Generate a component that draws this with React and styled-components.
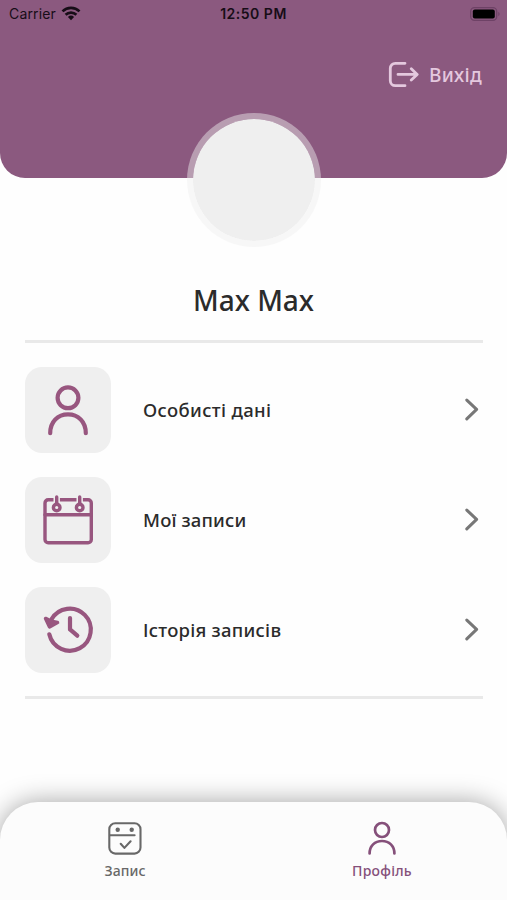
import React from "react"
import styled, { createGlobalStyle } from "styled-components"

const GlobalStyle = createGlobalStyle`
  * {
    box-sizing: border-box;
  }
  body {
    margin: 0;
    background: #fefefe;
    font-family: "Noto Sans", "Open Sans", sans-serif;
  }
`
const Screen = styled.div`
  display: flex;
  flex-direction: column;
  width: 507px;
  height: 900px;
  overflow: hidden;
`
const Header = styled.header`
  height: 178px;
  flex-shrink: 0;
  background: #8b597f;
  border-radius: 0 0 25px 25px;
`
const StatusBar = styled.div`
  display: grid;
  grid-template-columns: 1fr auto 1fr;
  align-items: center;
  height: 27px;
  padding: 0 5px 0 9px;
  color: #170d17;
  font-family: Inter, sans-serif;
  font-size: 14px;
`
const Carrier = styled.div`
  display: flex;
  align-items: center;
  gap: 5px;
  letter-spacing: 0.15px;
`
const Time = styled.div`
  margin-right: 4px;
  font-weight: 600;
  letter-spacing: 0.5px;
`
const Battery = styled.svg`
  justify-self: end;
`
const Logout = styled.button`
  display: flex;
  align-items: center;
  gap: 10px;
  margin: 34px 25px 0 auto;
  padding: 0;
  border: 0;
  background: none;
  color: #e4c8de;
  font-family: inherit;
  font-size: 19px;
  font-weight: 500;
  line-height: 28px;
  letter-spacing: ${props => props.spacing}px;
`
const Avatar = styled.div`
  width: 134px;
  height: 134px;
  flex-shrink: 0;
  margin: -65px auto 0;
  border: 6px solid rgba(239, 239, 239, 0.45);
  border-radius: 50%;
  background: #efefef;
  background-clip: padding-box;
`
const Name = styled.h1`
  margin: 33px 0 20px;
  color: #2b2b2b;
  font-size: 28px;
  font-weight: 500;
  line-height: 40px;
  text-align: center;
  letter-spacing: ${props => props.spacing}px;
`
const Menu = styled.nav`
  display: flex;
  flex-direction: column;
  gap: 24px;
  margin: 0 24px 0 25px;
  padding: 24px 0 23px;
  border-top: 3px solid #e9e9e9;
  border-bottom: 3px solid #e9e9e9;
`
const MenuRow = styled.div`
  display: flex;
  align-items: center;
  height: 86px;
`
const IconTile = styled.div`
  width: 86px;
  height: 86px;
  margin-right: 32px;
  border-radius: 17px;
  background: #efefef;
  color: #98567f;
`
const MenuLabel = styled.span`
  flex: 1;
  color: #2b2b2b;
  font-size: 18.5px;
  font-weight: 550;
  line-height: 28px;
  letter-spacing: ${props => props.spacing}px;
`
const TabBar = styled.footer`
  display: flex;
  height: 98px;
  margin-top: auto;
  padding: 19px 0 0;
  justify-content: space-between;
  border-radius: 38px 38px 0 0;
  background: #fcfcfc;
  box-shadow: 0 0 26px rgba(0, 0, 0, 0.36);
`
const Tab = styled.div`
  display: flex;
  flex-direction: column;
  align-items: center;
  width: 250px;
  color: ${props => (props.active ? "#85507a" : "#686868")};
  font-size: 14px;
  font-weight: 550;
  line-height: 20px;
  letter-spacing: ${props => props.spacing}px;

  svg {
    margin-bottom: 4px;
  }
`

const strokeProps = {
  fill: "none",
  stroke: "currentColor",
  strokeLinecap: "round",
  strokeLinejoin: "round",
}

const WifiIcon = () => (
  <svg width="20" height="15" viewBox="0 0 20 15">
    <g fill="none" stroke="#170d17" strokeWidth="2.7">
      <path d="M1.5 5.4a12.2 12.2 0 0 1 17 0" />
      <path d="M4.6 8.7a7.8 7.8 0 0 1 10.8 0" />
    </g>
    <path d="M10 14.2 6.9 11a4.5 4.5 0 0 1 6.2 0z" fill="#170d17" />
  </svg>
)

const BatteryIcon = () => (
  <Battery width="32" height="14" viewBox="0 0 32 14">
    <rect x="0.7" y="0.7" width="26" height="12.6" rx="3.8" fill="none" stroke="#6e4266" strokeWidth="1.3" />
    <rect x="2.8" y="2.6" width="22" height="8.8" rx="2" fill="#000" />
    <path d="M28.3 4.8v4.4c1.8-.7 1.8-3.7 0-4.4z" fill="#6e4266" />
  </Battery>
)

const LogoutIcon = () => (
  <svg width="31" height="28" viewBox="0 0 31 28" {...strokeProps} strokeWidth="2.8">
    <path d="M17 2.3H7.3a5 5 0 0 0-5 5v12.4a5 5 0 0 0 5 5H17" />
    <path d="M10 13.4h19M23.3 7.8l5.9 5.6-5.9 5.7" />
  </svg>
)

const PersonIcon = () => (
  <svg width="86" height="86" viewBox="0 0 86 86" {...strokeProps} strokeWidth="4.2">
    <circle cx="43" cy="30.8" r="10.4" />
    <path d="M25.2 66.2c0-11.6 7.6-18.8 17.8-18.8s17.8 7.2 17.8 18.8" />
  </svg>
)

const CalendarIcon = () => (
  <svg width="86" height="86" viewBox="0 0 86 86" {...strokeProps} strokeWidth="3.4">
    <rect x="20" y="22.8" width="46.3" height="43" rx="3.2" />
    <path d="M20 37.7h46.3" />
    <path d="M31.7 20v7M54.7 20v7" stroke="#efefef" strokeWidth="6.4" />
    <circle cx="31.7" cy="30.5" r="3.3" />
    <circle cx="54.7" cy="30.5" r="3.3" />
    <path d="M31.7 20v7M54.7 20v7" />
  </svg>
)

const HistoryIcon = () => (
  <svg width="86" height="86" viewBox="0 0 86 86" {...strokeProps} strokeWidth="4.2">
    <path d="M24.3 47.3a21 21 0 1 0 2.2-15" />
    <path d="M20.6 31.5l3.9 8.3 8-4.3-6-1.2z" fill="currentColor" strokeWidth="3.6" />
    <path d="M45 31v11.4l7.3 6.3" />
  </svg>
)

const ChevronIcon = () => (
  <svg width="18" height="26" viewBox="0 0 18 26" {...strokeProps} stroke="#777" strokeWidth="3">
    <path d="M1.8 3.1l9.8 9.3-9.8 9.5" />
  </svg>
)

const BookingTabIcon = () => (
  <svg width="36" height="36" viewBox="0 0 36 36" {...strokeProps} strokeWidth="2.1">
    <rect x="2.3" y="2.2" width="31.2" height="30.4" rx="6" />
    <path d="M3 14.2h24.6" />
    <path d="M13.7 22.8l3.7 4.1 6.2-6.6" />
    <circle cx="10.7" cy="8.8" r="2.2" fill="currentColor" stroke="none" />
    <circle cx="24.7" cy="8.8" r="2.2" fill="currentColor" stroke="none" />
  </svg>
)

const ProfileTabIcon = () => (
  <svg width="36" height="36" viewBox="0 0 36 36" {...strokeProps} strokeWidth="2.7">
    <circle cx="18" cy="9" r="7" />
    <path d="M5.6 32.4c0-7.6 5.2-12.4 12.4-12.4s12.4 4.8 12.4 12.4" />
  </svg>
)

const items = [
  { label: "Особисті дані", icon: <PersonIcon />, spacing: 0.35 },
  { label: "Мої записи", icon: <CalendarIcon />, spacing: 0.15 },
  { label: "Історія записів", icon: <HistoryIcon />, spacing: 0.25 },
]

const App = () => {
  return (
    <>
      <GlobalStyle />
      <Screen>
        <Header>
          <StatusBar>
            <Carrier>
              Carrier <WifiIcon />
            </Carrier>
            <Time>12:50 PM</Time>
            <BatteryIcon />
          </StatusBar>
          <Logout spacing={0.3}>
            <LogoutIcon />
            Вихід
          </Logout>
        </Header>
        <Avatar />
        <Name spacing={0}>Max Max</Name>
        <Menu>
          {items.map(item => (
            <MenuRow key={item.label}>
              <IconTile>{item.icon}</IconTile>
              <MenuLabel spacing={item.spacing}>{item.label}</MenuLabel>
              <ChevronIcon />
            </MenuRow>
          ))}
        </Menu>
        <TabBar>
          <Tab spacing={0.05}>
            <BookingTabIcon />
            Запис
          </Tab>
          <Tab active spacing={0.25}>
            <ProfileTabIcon />
            Профіль
          </Tab>
        </TabBar>
      </Screen>
    </>
  )
}

export default App
